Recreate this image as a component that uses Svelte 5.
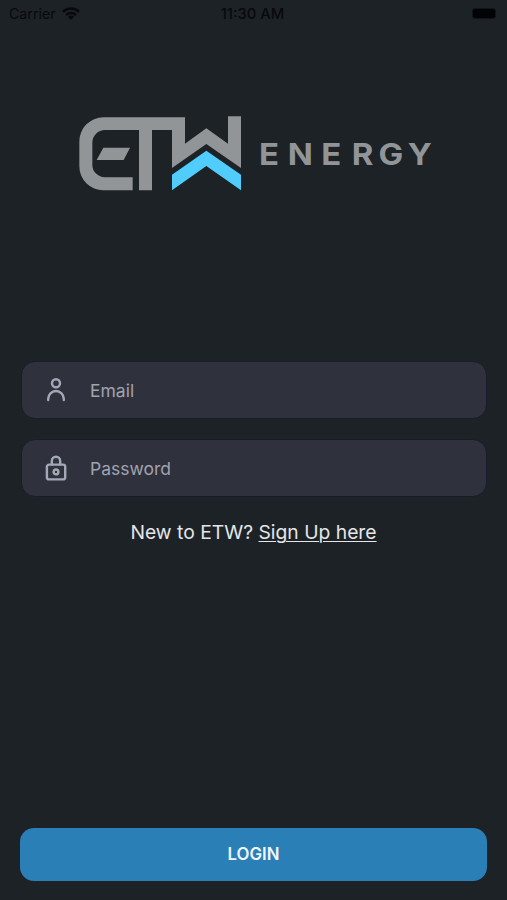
<script>
	let email = '';
	let password = '';
</script>

<main>
	<div class="status-bar">
		<div class="carrier">
			<span>Carrier</span>
			<svg class="wifi" viewBox="0 0 18 13">
				<path d="M1 4.8a11.5 11.5 0 0 1 16 0M4 8a7.2 7.2 0 0 1 10 0" />
				<path class="dot" d="M9 12.8L6 9.9a4.3 4.3 0 0 1 6 0z" />
			</svg>
		</div>
		<span class="time">11:30 AM</span>
		<div class="battery"></div>
	</div>

	<svg class="logo" viewBox="0 0 354 76" role="img" aria-label="ETW Energy">
		<g transform="translate(-9 -11) scale(.33333)">
			<path
				fill="#929598"
				d="M345 37H100A72 72 0 0 0 28 109V184A72 72 0 0 0 100 256H188V217H105A38 38 0 0 1 67 179V113A38 38 0 0 1 105 75H207V256H246V75H306V189L409 117L513 189V34H474V116L409 70L345 116Z"
			/>
			<path fill="#929598" d="M100 128H180L161 165H80Z" />
			<path fill="#51cdfd" d="M306 209L409 137L513 209V256L409 183L306 256Z" />
		</g>
		<text
			class="energy"
			transform="translate(180 48.5) scale(1.08 1)"
			x="9.3 38.2 66.9 95.8 122.2 148.8">ENERGY</text
		>
	</svg>

	<form on:submit|preventDefault>
		<label class="field">
			<svg viewBox="0 0 24 28">
				<circle cx="12" cy="7.2" r="4" />
				<path d="M4.2 24v-1.2a7.8 7.8 0 0 1 15.6 0V24" />
			</svg>
			<input type="email" placeholder="Email" bind:value={email} />
		</label>
		<label class="field">
			<svg viewBox="0 0 24 28">
				<rect x="2.9" y="10.6" width="18.3" height="14.8" rx="2.2" />
				<path d="M7.8 10.4V6.9a4.2 4.2 0 0 1 8.4 0v3.5" />
				<circle cx="12" cy="17.9" r="2.4" />
			</svg>
			<input type="password" placeholder="Password" bind:value={password} />
		</label>

		<p>New to ETW? <a href="#signup">Sign Up here</a></p>

		<button type="submit">LOGIN</button>
	</form>
</main>

<style>
	:global(body) {
		margin: 0;
		background: #1d2226;
	}
	main {
		display: flex;
		flex-direction: column;
		box-sizing: border-box;
		height: 900px;
		padding-bottom: 19px;
		background: #1d2226;
		font-family: Inter, 'Liberation Sans', sans-serif;
	}
	.status-bar {
		display: grid;
		grid-template-columns: 1fr auto 1fr;
		align-items: center;
		height: 26px;
		padding: 0 11px 0 9px;
		color: #07090d;
		font-size: 14.2px;
	}
	.carrier {
		display: flex;
		align-items: center;
		gap: 6px;
	}
	.wifi {
		width: 18px;
		height: 13px;
		fill: none;
		stroke: #07090d;
		stroke-width: 2.6;
	}
	.wifi .dot {
		fill: #07090d;
		stroke: none;
	}
	.time {
		padding-top: 2px;
		font-size: 14.8px;
		font-weight: 500;
	}
	.battery {
		justify-self: end;
		width: 22px;
		height: 9px;
		border: 1px solid #11151a;
		border-radius: 3px;
		background: #020304;
	}
	.logo {
		display: block;
		width: 354px;
		height: 76px;
		margin: 90px 0 0 79px;
	}
	.energy {
		fill: #929598;
		font-size: 30.5px;
		font-weight: 700;
		text-anchor: middle;
	}
	form {
		display: flex;
		flex: 1;
		flex-direction: column;
		margin-top: 169px;
		padding: 0 20px;
	}
	.field {
		display: flex;
		align-items: center;
		box-sizing: border-box;
		height: 58px;
		margin: 0 0 20px 1px;
		padding-left: 22px;
		border: 1px solid #191c2b;
		border-radius: 14px;
		background: #2f313d;
	}
	.field svg {
		width: 24px;
		height: 28px;
		fill: none;
		stroke: #a3a7b6;
		stroke-width: 2.4;
		stroke-linecap: round;
	}
	input {
		flex: 1;
		min-width: 0;
		margin: 0 0 0 22px;
		padding: 0;
		outline: none;
		border: none;
		background: transparent;
		color: #e4e6ea;
		font-family: inherit;
		font-size: 17.5px;
	}
	input::placeholder {
		color: #a0a3b0;
		opacity: 1;
	}
	p {
		margin: 2px 0 0;
		color: #e4e6e8;
		font-size: 19.3px;
		line-height: 26px;
		text-align: center;
	}
	a {
		color: inherit;
		text-decoration: underline;
		text-decoration-thickness: 1px;
		text-underline-offset: 2px;
	}
	button {
		height: 53px;
		margin-top: auto;
		padding-bottom: 2px;
		border: none;
		border-radius: 14px;
		background: #2b7fb7;
		color: #eff7fc;
		font-family: inherit;
		font-size: 16.8px;
		font-weight: 600;
		cursor: pointer;
	}
</style>
